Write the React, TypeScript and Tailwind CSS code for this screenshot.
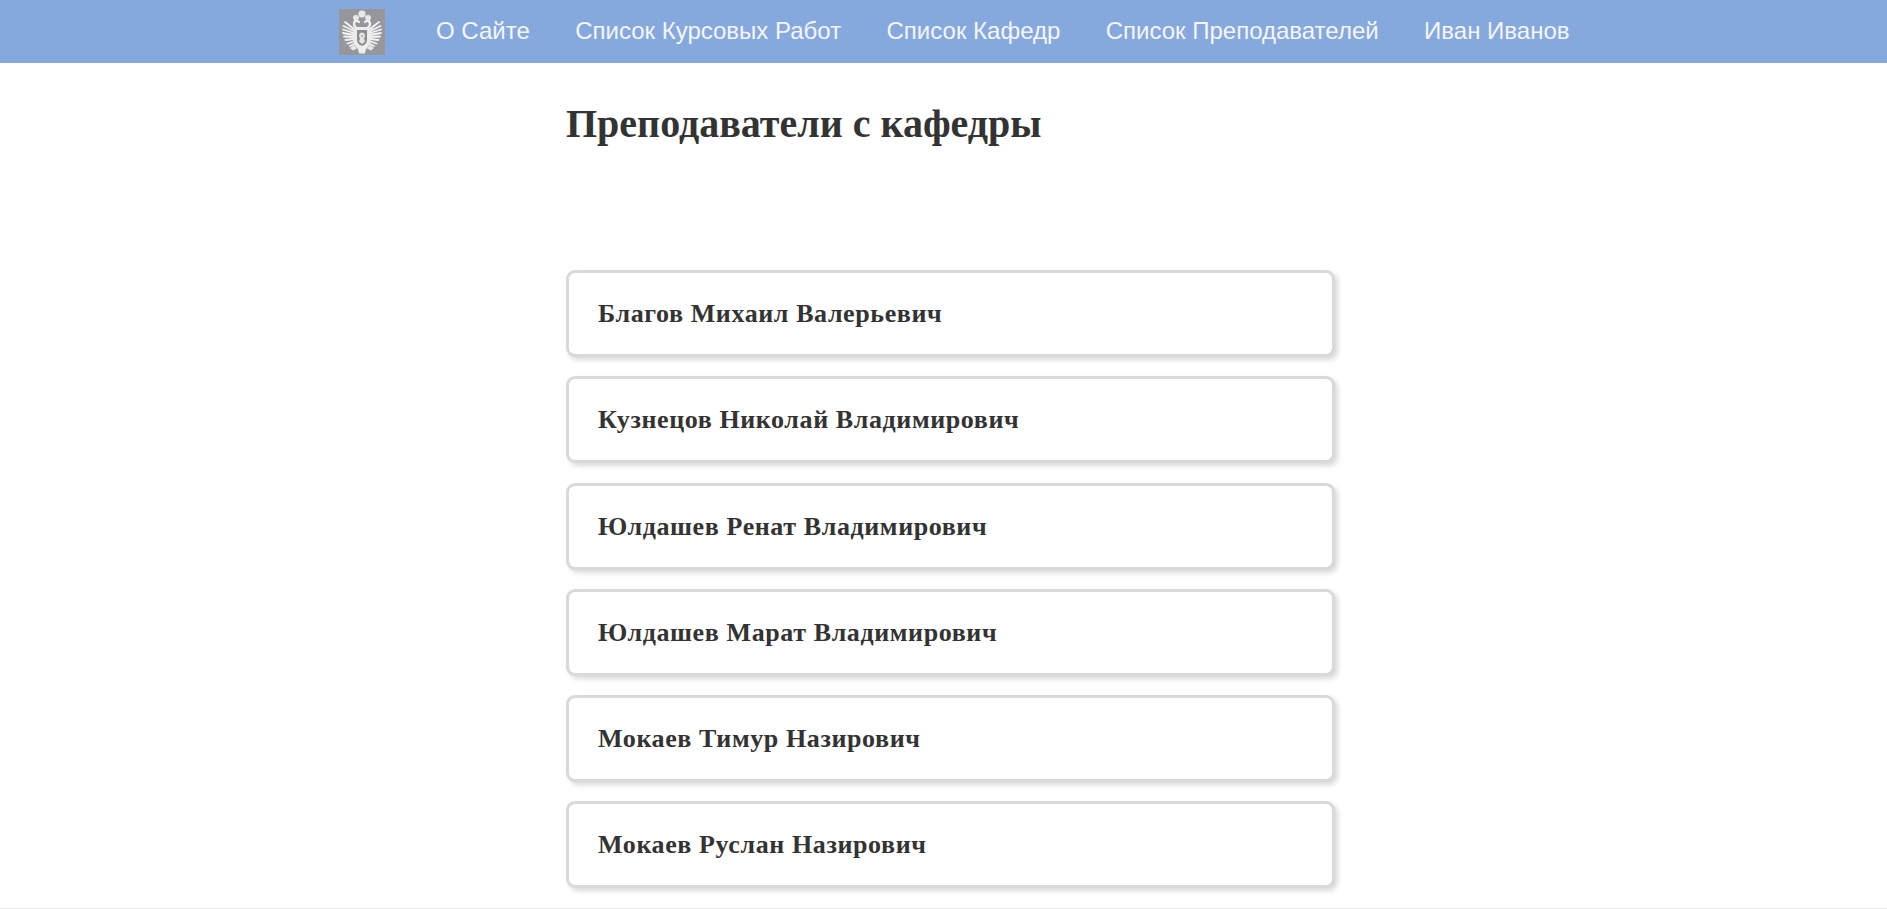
import React from 'react';

const links = ['О Сайте', 'Список Курсовых Работ', 'Список Кафедр', 'Список Преподавателей', 'Иван Иванов'];

const teachers = [
  'Благов Михаил Валерьевич',
  'Кузнецов Николай Владимирович',
  'Юлдашев Ренат Владимирович',
  'Юлдашев Марат Владимирович',
  'Мокаев Тимур Назирович',
  'Мокаев Руслан Назирович',
];

const Crest = () => (
  <svg viewBox="0 0 46 46" className="w-[46px] h-[46px] bg-[#97979b]">
    {/* crowns */}
    <g fill="#e8e8e8">
      <ellipse cx="23" cy="5" rx="3.6" ry="3.4" />
      <ellipse cx="17" cy="8.5" rx="3" ry="2.6" />
      <ellipse cx="29" cy="8.5" rx="3" ry="2.6" />
    </g>
    {/* heads and necks */}
    <g fill="none" stroke="#f0f0f0" strokeWidth="2.4" strokeLinecap="round">
      <path d="M19 20c-4-2-5-5-3-8 2-1 3 0 4 1" />
      <path d="M27 20c4-2 5-5 3-8-2-1-3 0-4 1" />
    </g>
    {/* wing feathers */}
    <g fill="none" stroke="#f4f4f4" strokeWidth="1.8" strokeLinecap="round">
      <path d="M15 20L6 13M15 22L4.5 17M15 24L4 20.5M15 26L4 24M15 28L5 27.5M15 30L6.5 31M16 32L8.5 34.5M17 34L11 37" />
      <path d="M31 20L40 13M31 22L41.5 17M31 24L42 20.5M31 26L42 24M31 28L41 27.5M31 30L39.5 31M30 32L37.5 34.5M29 34L35 37" />
    </g>
    {/* body, legs, tail */}
    <path d="M16 18h14l2.5 11-2.5 8-3 3-1 4.5h-6L19 40l-3-3-2.500-8z" fill="#ececec" />
    <path d="M15 36l-4 3 3 2.500 4-2zM31 36l4 3-3 2.500-4-2z" fill="#e8e8e8" />
    {/* shield */}
    <path d="M18 21h10v10c0 3-2 5-5 6-3-1-5-3-5-6z" fill="#8d8d91" />
    <path d="M23 23.500c2 0 3 1.600 3 3.500l-1 2.500 1 3-3 2.500-3-2.500 1-3-1-2.500c0-1.900 1-3.500 3-3.500z" fill="#e6e6e6" />
    <circle cx="23" cy="27" r="1" fill="#a2a2a6" />
  </svg>
);

export default function App() {
  return (
    <div className="min-h-[909px] bg-white border-b border-[#e7e7e7] overflow-hidden">
      <nav className="h-[63px] bg-[#86a9dd] flex items-center pl-[339px]">
        <Crest />
        <ul className="flex ml-[51px] pb-[2px] gap-[45.4px] font-['Liberation_Sans',sans-serif] text-[24px] text-[#f5f5f5]">
          {links.map((link) => (
            <li key={link}>
              <a href="#">{link}</a>
            </li>
          ))}
        </ul>
      </nav>

      <main className="w-[769px] ml-[566px] font-['Liberation_Serif',serif] text-[#333333]">
        <h1 className="mt-[35px] mb-[120px] text-[40px] leading-[52px] font-bold">Преподаватели с кафедры</h1>
        <div className="flex flex-col gap-[19.3px]">
          {teachers.map((name) => (
            <div
              key={name}
              className="h-[87px] flex items-center px-[29px] bg-white border-[3px] border-[#d9d9d9] rounded-[9px] shadow-[3px_3px_5px_rgba(0,0,0,0.15)] text-[26px] tracking-[0.6px] font-bold"
            >
              {name}
            </div>
          ))}
        </div>
      </main>
    </div>
  );
}
